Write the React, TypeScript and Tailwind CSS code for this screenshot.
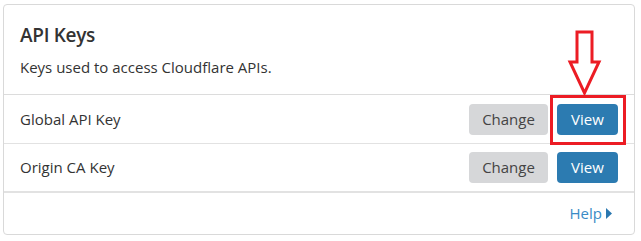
import React from 'react';

const rows = ['Global API Key', 'Origin CA Key'];

const App = () => {
  return (
    <div className="relative w-[641px] h-[241px] bg-white font-['Open_Sans',sans-serif] text-[#333]">
      <div className="absolute left-[3px] top-[4px] w-[632px] h-[231px] rounded-[4px] border border-[#d9d9d9] flex flex-col">
        {/* Header */}
        <div className="h-[90px] px-4 pt-[16px] border-b border-[#dcdcdc]">
          <h2 className="text-[19px] leading-[28px] font-semibold tracking-[-0.3px] text-[#333]">API Keys</h2>
          <p className="mt-[8px] text-[15px] leading-[20px]">Keys used to access Cloudflare APIs.</p>
        </div>

        {rows.map((name, i) => (
          <div
            key={name}
            className={`h-[49px] flex items-center justify-between pl-4 pr-4 ${
              i === rows.length - 1 ? 'border-b-2 border-[#e2e2e2]' : 'border-b border-[#e2e2e2]'
            }`}
          >
            <span className="text-[15px]">{name}</span>
            <div className="flex gap-[9px]">
              <button className="w-[79px] h-[31px] rounded-[4px] bg-[#d6d7d9] text-[15px] text-[#444]">
                Change
              </button>
              <button className="w-[61px] h-[31px] rounded-[4px] bg-[#2c7bb1] text-[15px] text-white">
                View
              </button>
            </div>
          </div>
        ))}

        {/* Footer */}
        <div className="flex-1 flex items-center justify-end pr-[22px]">
          <span className="text-[15px] text-[#3a8bc6] flex items-center gap-[4px]">
            Help
            <svg width="6" height="11" viewBox="0 0 6 11">
              <path d="M0 0 L6 5.5 L0 11 Z" fill="#2a78b0" />
            </svg>
          </span>
        </div>
      </div>

      {/* annotation overlay */}
      <div className="absolute left-[550px] top-[95px] w-[76px] h-[50px] border-[3px] border-[#ec1c24]" />
      <svg className="absolute left-[566px] top-[29px]" width="40" height="68" viewBox="0 0 40 68">
        <path
          d="M11 3 L26 3 L26 33 L33 33 L18.5 64 L4 33 L11 33 Z"
          fill="white"
          stroke="#ec1c24"
          strokeWidth="3"
          strokeLinejoin="miter"
        />
      </svg>
    </div>
  );
};

export default App;
